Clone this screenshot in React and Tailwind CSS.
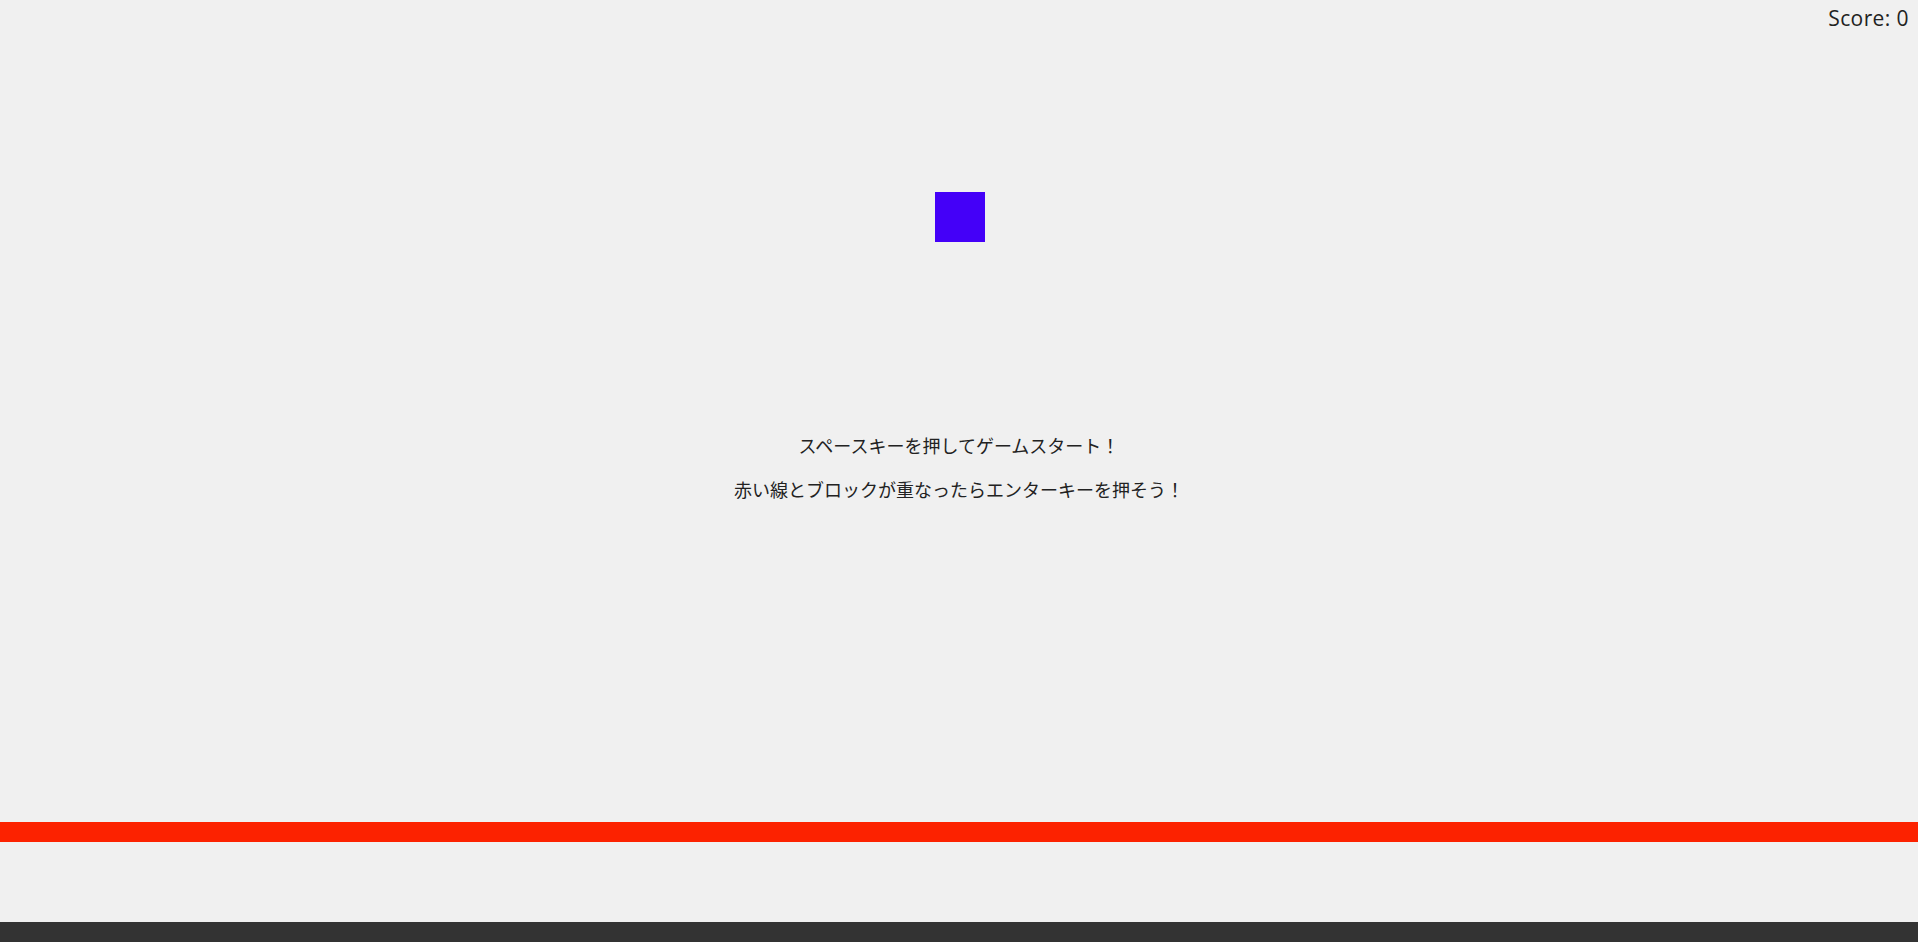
export default function App() {
  const score = 0;

  return (
    <main className="flex h-[942px] w-full flex-col bg-[#f0f0f0] font-['Open_Sans','Noto_Sans_CJK_JP',sans-serif] text-[#222]">
      <div className="flex h-[40px] justify-end pr-[9px] pt-[4px]">
        <span className="text-[21px] leading-[28px] tracking-[0.4px]">Score: {score}</span>
      </div>

      <div className="mt-[152px] flex justify-center pl-[2px]">
        <div className="h-[50px] w-[50px] bg-[#4400f8]" />
      </div>

      <div className="mt-[189px] flex flex-col items-center gap-[16px] font-['Noto_Sans_CJK_JP',sans-serif] text-[18px] leading-[28px]">
        <p>スペースキーを押してゲームスタート！</p>
        <p>赤い線とブロックが重なったらエンターキーを押そう！</p>
      </div>

      <div className="mt-[319px] h-[20px] w-full bg-[#fc2200]" />

      <footer className="mt-[80px] h-[20px] w-full bg-[#333333]" />
    </main>
  );
}
